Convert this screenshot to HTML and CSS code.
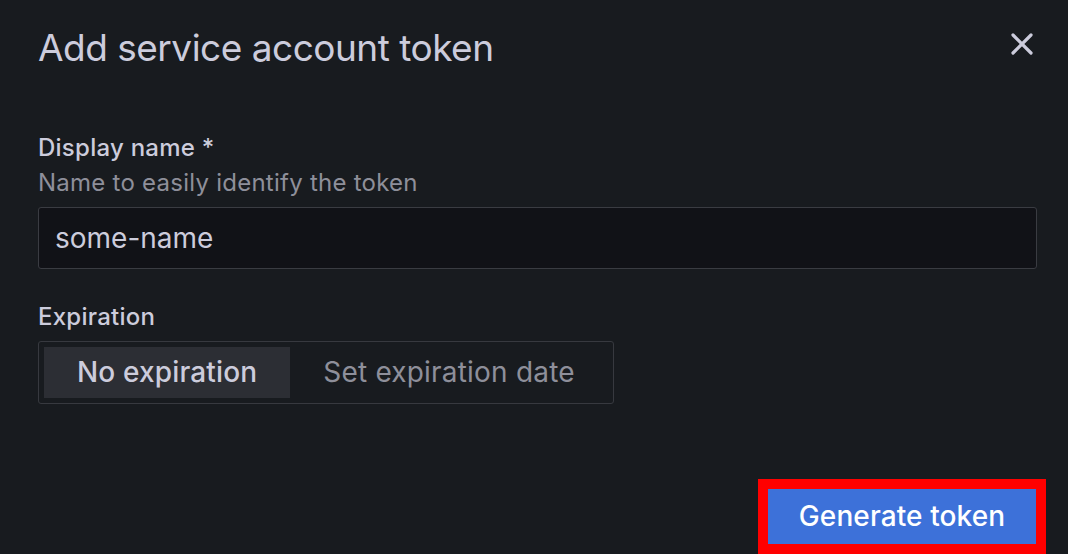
FILE: index.html
```html
<!DOCTYPE html>
<html lang="en">
<head>
<meta charset="utf-8">
<title>Add service account token</title>
<link rel="stylesheet" href="styles.css">
</head>
<body>
<div class="modal">
  <div class="header">
    <h2 class="title">Add service account token</h2>
    <button class="close" aria-label="Close">
      <svg width="24" height="24" viewBox="0 0 24 24"><path d="M3 3 L21 21 M21 3 L3 21" stroke="#ccccdc" stroke-width="3.2" stroke-linecap="round" fill="none"/></svg>
    </button>
  </div>
  <div class="form">
    <div class="field">
      <div class="label">Display name *</div>
      <div class="desc">Name to easily identify the token</div>
      <div class="input">some-name</div>
    </div>
    <div class="field field-exp">
      <div class="label">Expiration</div>
      <div class="radio-group">
        <div class="seg seg-active">No expiration</div>
        <div class="seg">Set expiration date</div>
      </div>
    </div>
  </div>
  <div class="footer">
    <button class="btn-primary">Generate token</button>
  </div>
</div>
</body>
</html>
```
FILE: styles.css
```css
* { box-sizing: border-box; }
html, body { margin: 0; padding: 0; }
body {
  background: #181b1f;
  font-family: Inter, "Noto Sans", sans-serif;
  color: #ccccdc;
  width: 1068px;
  height: 554px;
  overflow: hidden;
}
.modal {
  display: flex;
  flex-direction: column;
  padding: 25px 31px 0 38px;
  height: 554px;
}
.header {
  display: flex;
  justify-content: space-between;
  align-items: flex-start;
}
.title {
  margin: 0;
  font-size: 37px;
  line-height: 46px;
  letter-spacing: -0.5px;
  font-weight: 400;
  color: #ccccdc;
}
.close {
  background: none;
  border: 0;
  padding: 0;
  margin: 7px 3px 0 0;
  width: 24px;
  height: 24px;
  display: flex;
}
.form {
  margin-top: 63px;
  display: flex;
  flex-direction: column;
}
.label {
  font-size: 24px;
  line-height: 28px;
  font-weight: 500;
  letter-spacing: 0.25px;
  color: #ccccdc;
}
.desc {
  margin-top: 6px;
  font-size: 24px;
  line-height: 29px;
  letter-spacing: 0.25px;
  color: #8e8f9a;
}
.input {
  margin-top: 10px;
  height: 62px;
  background: #111217;
  border: 1px solid #3a3c42;
  border-radius: 3px;
  padding: 0 16px;
  font-size: 28px;
  line-height: 60px;
  color: #ccccdc;
}
.field-exp {
  margin-top: 34px;
  display: flex;
  flex-direction: column;
}
.radio-group {
  margin-top: 10px;
  display: inline-flex;
  align-self: flex-start;
  border: 1px solid #37393f;
  border-radius: 3px;
  padding: 5px;
}
.seg {
  height: 51px;
  line-height: 51px;
  padding: 0 33px;
  font-size: 28px;
  letter-spacing: 0.2px;
  color: #8e8f9a;
}
.seg-active {
  background: #2c2e34;
  color: #ccccdc;
  font-weight: 500;
  letter-spacing: 0.15px;
}
.footer {
  margin-top: 85px;
  display: flex;
  justify-content: flex-end;
  padding-right: 1px;
}
.btn-primary {
  width: 268px;
  height: 55px;
  background: #3d71d9;
  color: #ffffff;
  border: 0;
  border-radius: 0;
  font-family: Inter, "Noto Sans", sans-serif;
  font-size: 28px;
  font-weight: 500;
  line-height: 55px;
  letter-spacing: 0.1px;
  padding: 0;
  outline: 10px solid #ff0000;
}
```
